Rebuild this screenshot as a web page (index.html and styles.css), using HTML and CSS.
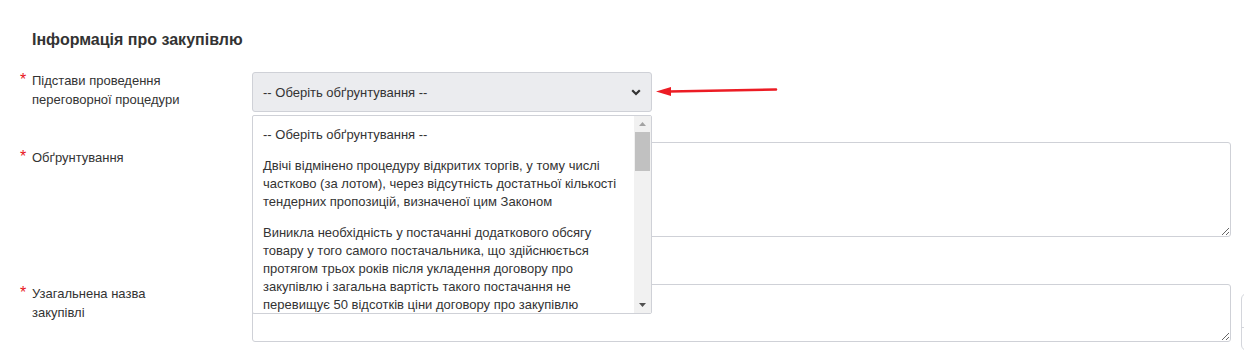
FILE: index.html
```html
<!DOCTYPE html>
<html lang="uk">
<head>
  <meta charset="UTF-8" />
  <meta name="viewport" content="width=device-width, initial-scale=1.0"/>
  <title>Інформація про закупівлю</title>
  <link rel="stylesheet" href="styles.css">
</head>
<body>
  <div class="section">
    <h3>Інформація про закупівлю</h3>

    <div class="row row-select">
      <label class="label">
        <span class="req">*</span>
        <span class="label-text">Підстави проведення переговорної процедури</span>
      </label>
      <div class="field">
        <div class="select-wrap">
          <div class="select">
            <span>-- Оберіть обґрунтування --</span>
            <svg class="chevron" width="10" height="7" viewBox="0 0 10 7">
              <path d="M1.2 1.2 L5 5 L8.8 1.2" fill="none" stroke="#333" stroke-width="2.2"/>
            </svg>
          </div>
          <svg class="pointer" width="124" height="12" viewBox="0 0 124 12">
            <polygon points="0,6.5 15,2 15,11" fill="#ec1c24"/>
            <path d="M13 6.5 L120 4.5" stroke="#ec1c24" stroke-width="2.6" stroke-linecap="round"/>
          </svg>

          <div class="dropdown">
            <div class="options">
              <div class="option">-- Оберіть обґрунтування --</div>
              <div class="option">Двічі відмінено процедуру відкритих торгів, у тому числі частково (за лотом), через відсутність достатньої кількості тендерних пропозицій, визначеної цим Законом</div>
              <div class="option">Виникла необхідність у постачанні додаткового обсягу товару у того самого постачальника, що здійснюється протягом трьох років після укладення договору про закупівлю і загальна вартість такого постачання не перевищує 50 відсотків ціни договору про закупівлю</div>
            </div>
            <div class="scrollbar">
              <svg class="sb-arrow" width="17" height="16" viewBox="0 0 17 16">
                <polygon points="5,10 12,10 8.5,6" fill="#a3a3a3"/>
              </svg>
              <div class="sb-track"><div class="sb-thumb"></div></div>
              <svg class="sb-arrow" width="17" height="16" viewBox="0 0 17 16">
                <polygon points="5,6 12,6 8.5,10" fill="#505050"/>
              </svg>
            </div>
          </div>
        </div>
      </div>
    </div>

    <div class="row row-reason">
      <label class="label">
        <span class="req">*</span>
        <span class="label-text">Обґрунтування</span>
      </label>
      <div class="field">
        <textarea class="area area-tall"></textarea>
      </div>
    </div>

    <div class="row row-name">
      <label class="label">
        <span class="req">*</span>
        <span class="label-text">Узагальнена назва закупівлі</span>
      </label>
      <div class="field">
        <textarea class="area area-short"></textarea>
      </div>
    </div>
  </div>

  <div class="side-widget"><div class="side-line"></div></div>
</body>
</html>
```

FILE: styles.css
```css
body {
  margin: 0;
  padding: 0;
  font-family: "Liberation Sans", Arial, sans-serif;
  font-size: 13px;
  color: #333;
  background: #fff;
  overflow: hidden;
  height: 354px;
  position: relative;
}
.section {
  padding: 30px 13px 0 20px;
}
h3 {
  margin: 0 0 22px 12px;
  font-size: 16px;
  line-height: 20px;
  font-weight: bold;
  color: #333;
}
.row {
  display: flex;
  align-items: flex-start;
}
.label {
  display: flex;
  width: 172px;
  margin-right: 60px;
  line-height: 19px;
}
.req {
  width: 12px;
  flex: none;
  color: #e8141c;
  font-size: 16px;
  line-height: 19px;
  position: relative;
  top: -1px;
}
.label-text {
  width: 160px;
}
.field {
  flex: 1;
}

.row-select .label { margin-top: -1px; }
.row-reason { margin-top: 30px; }
.row-reason .label { padding-top: 6px; }
.row-name { margin-top: 47px; }
.row-name .label { margin-top: 0; }

.select-wrap {
  position: relative;
  display: flex;
  align-items: center;
}
.select {
  box-sizing: border-box;
  width: 400px;
  height: 40px;
  padding: 0 10px;
  display: flex;
  align-items: center;
  justify-content: space-between;
  background: #ebecef;
  border: 1px solid #cfd1d7;
  border-radius: 3px;
  color: #333;
}
.pointer {
  margin-left: 4px;
  margin-top: -3px;
}

.dropdown {
  position: absolute;
  left: 0;
  top: 43px;
  width: 400px;
  height: 199px;
  box-sizing: border-box;
  display: flex;
  background: #fff;
  border: 1px solid #cfd1d7;
  border-radius: 2px;
  z-index: 5;
}
.options {
  flex: 1;
  overflow: hidden;
  padding-top: 4px;
}
.option {
  padding: 6px 10px 7px 10px;
  line-height: 18px;
  color: #333;
}
.scrollbar {
  width: 17px;
  flex: none;
  background: #f1f1f1;
  display: flex;
  flex-direction: column;
}
.sb-arrow {
  display: block;
  flex: none;
}
.sb-track {
  flex: 1;
}
.sb-thumb {
  margin: 0 1px;
  height: 39px;
  background: #c1c1c1;
}

.area {
  display: block;
  box-sizing: border-box;
  width: 100%;
  border: 1px solid #cfd1d7;
  border-radius: 3px;
  resize: vertical;
  font-family: inherit;
  font-size: 13px;
  padding: 6px 10px;
  margin: 0;
  outline: none;
}
.area-tall { height: 95px; }
.area-short { height: 58px; }

.side-widget {
  position: absolute;
  left: 1241px;
  top: 293px;
  width: 30px;
  height: 56px;
  border: 1px solid #d4d6dc;
  border-radius: 6px;
  background: #fff;
}
.side-line {
  margin-top: 33px;
  border-top: 1px solid #d4d6dc;
}
```
